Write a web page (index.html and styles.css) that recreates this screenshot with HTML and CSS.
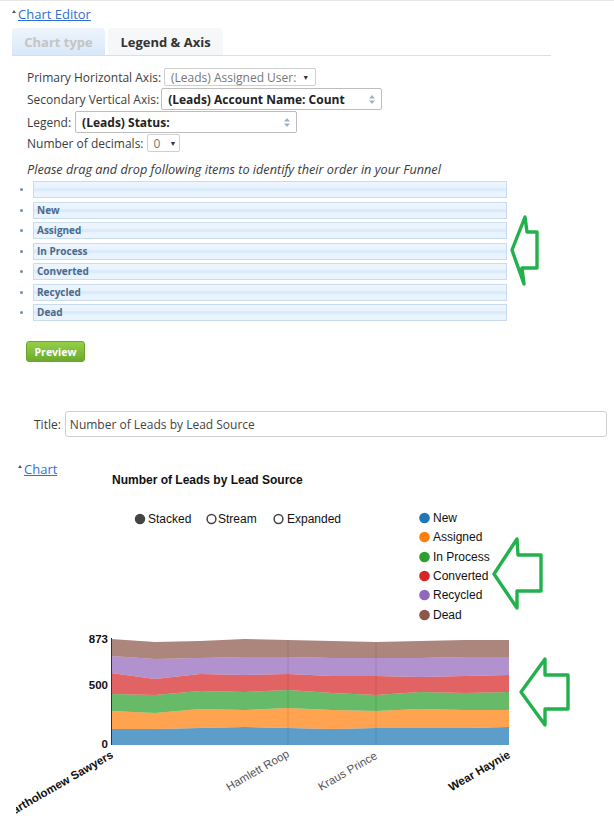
FILE: index.html
```html
<!DOCTYPE html>
<html>
<head>
<meta charset="utf-8">
<link rel="stylesheet" href="styles.css">
</head>
<body>
<div class="page">
  <div class="section-link editor-link"><span class="caret"></span><a href="#">Chart Editor</a></div>

  <div class="tabs">
    <div class="tab tab-inactive">Chart type</div>
    <div class="tab tab-active">Legend &amp; Axis</div>
  </div>

  <div class="form">
    <div class="row row-1">
      <span class="label">Primary Horizontal Axis:</span>
      <div class="select sel-primary"><span class="sel-text muted">(Leads) Assigned User:</span><span class="tri">&#9660;</span></div>
    </div>
    <div class="row row-2">
      <span class="label">Secondary Vertical Axis:</span>
      <div class="select sel-wide sel-secondary"><span class="sel-text strong">(Leads) Account Name: Count</span>
        <svg class="updown" width="6" height="9" viewBox="0 0 6 9"><path d="M3 0 L6 3.5 H0 Z M0 5.5 H6 L3 9 Z" fill="#9bb3c8"/></svg>
      </div>
    </div>
    <div class="row row-3">
      <span class="label">Legend:</span>
      <div class="select sel-wide sel-legend"><span class="sel-text strong">(Leads) Status:</span>
        <svg class="updown" width="6" height="9" viewBox="0 0 6 9"><path d="M3 0 L6 3.5 H0 Z M0 5.5 H6 L3 9 Z" fill="#9bb3c8"/></svg>
      </div>
    </div>
    <div class="row row-4">
      <span class="label">Number of decimals:</span>
      <div class="select sel-dec"><span class="sel-text muted">0</span><span class="tri">&#9660;</span></div>
    </div>

    <p class="hint">Please drag and drop following items to identify their order in your Funnel</p>

    <ul class="order-list">
      <li><span class="dot"></span><div class="item"></div></li>
      <li><span class="dot"></span><div class="item">New</div></li>
      <li><span class="dot"></span><div class="item">Assigned</div></li>
      <li><span class="dot"></span><div class="item">In Process</div></li>
      <li><span class="dot"></span><div class="item">Converted</div></li>
      <li><span class="dot"></span><div class="item">Recycled</div></li>
      <li><span class="dot"></span><div class="item">Dead</div></li>
    </ul>

    <button class="preview">Preview</button>
  </div>

  <div class="title-row">
    <span class="label">Title:</span>
    <div class="title-input">Number of Leads by Lead Source</div>
  </div>

  <div class="section-link chart-link"><span class="caret"></span><a href="#">Chart</a></div>

  <svg class="chart" width="598" height="354" viewBox="0 0 598 354">
    <g transform="translate(-16,-471)">
      <text class="ch-title" x="112" y="485">Number of Leads by Lead Source</text>

      <circle cx="140" cy="520" r="4.6" fill="#444" stroke="#444" stroke-width="1.2"/>
      <text class="ch-text" x="148" y="524">Stacked</text>
      <circle cx="211.5" cy="520" r="4.4" fill="#fff" stroke="#444" stroke-width="1.5"/>
      <text class="ch-text" x="218" y="524">Stream</text>
      <circle cx="278.5" cy="520" r="4.4" fill="#fff" stroke="#444" stroke-width="1.5"/>
      <text class="ch-text" x="287" y="524">Expanded</text>

      <circle cx="424.5" cy="519" r="5.3" fill="#1f77b4"/>
      <text class="ch-text" x="433" y="523">New</text>
      <circle cx="424.5" cy="538" r="5.3" fill="#ff7f0e"/>
      <text class="ch-text" x="433" y="542">Assigned</text>
      <circle cx="424.5" cy="558" r="5.3" fill="#2ca02c"/>
      <text class="ch-text" x="433" y="562">In Process</text>
      <circle cx="424.5" cy="577" r="5.3" fill="#d62728"/>
      <text class="ch-text" x="433" y="581">Converted</text>
      <circle cx="424.5" cy="596" r="5.3" fill="#9467bd"/>
      <text class="ch-text" x="433" y="600">Recycled</text>
      <circle cx="424.5" cy="616" r="5.3" fill="#8c564b"/>
      <text class="ch-text" x="433" y="620">Dead</text>

      <g class="layers" fill-opacity="0.72">
        <path fill="#1f77b4" d="M111,730 L155,730 L200,729 L245,728 L288,729 L332,730 L376,729 L420,729 L465,729 L509,728 L509,746 L111,746 Z"/>
        <path fill="#ff7f0e" d="M111,712 L155,714 L200,710 L245,711 L288,709 L332,711 L376,712 L420,710 L465,711 L509,711 L509,728 L465,729 L420,729 L376,729 L332,730 L288,729 L245,728 L200,729 L155,730 L111,730 Z"/>
        <path fill="#2ca02c" d="M111,695 L155,696 L200,692 L245,693 L288,691 L332,694 L376,696 L420,693 L465,694 L509,693 L509,711 L465,711 L420,710 L376,712 L332,711 L288,709 L245,711 L200,710 L155,714 L111,712 Z"/>
        <path fill="#d62728" d="M111,674 L155,680 L200,675 L245,676 L288,675 L332,677 L376,677 L420,678 L465,677 L509,676 L509,693 L465,694 L420,693 L376,696 L332,694 L288,691 L245,693 L200,692 L155,696 L111,695 Z"/>
        <path fill="#9467bd" d="M111,657 L155,660 L200,659 L245,658 L288,658 L332,659 L376,659 L420,659 L465,658 L509,658 L509,676 L465,677 L420,678 L376,677 L332,677 L288,675 L245,676 L200,675 L155,680 L111,674 Z"/>
        <path fill="#8c564b" d="M111,640 L155,643 L200,642 L245,640 L288,641 L332,642 L376,643 L420,642 L465,641 L509,641 L509,658 L465,658 L420,659 L376,659 L332,659 L288,658 L245,658 L200,659 L155,660 L111,657 Z"/>
      </g>
      <line x1="288" y1="641" x2="288" y2="746" stroke="#000" stroke-opacity="0.1"/>
      <line x1="376" y1="643" x2="376" y2="746" stroke="#000" stroke-opacity="0.1"/>
      <line x1="111.5" y1="639" x2="111.5" y2="746" stroke="#333" stroke-width="1"/>

      <text class="ax-y" x="108" y="644">873</text>
      <text class="ax-y" x="108" y="690">500</text>
      <text class="ax-y" x="108" y="749">0</text>

      <text class="ax-x bold" transform="translate(114,758) rotate(-30)">Bartholomew Sawyers</text>
      <text class="ax-x" transform="translate(290,757) rotate(-30)">Hamlett Roop</text>
      <text class="ax-x" transform="translate(378,759) rotate(-30)">Kraus Prince</text>
      <text class="ax-x bold" transform="translate(511,758) rotate(-30)">Wear Haynie</text>
    </g>
  </svg>

  <svg class="arrows" width="614" height="825" viewBox="0 0 614 825">
    <g fill="none" stroke="#22b14c" stroke-width="3.4" stroke-linejoin="round">
      <polygon points="512,249 525,216 527,231 537,231 537,267 522,267 524,283"/>
      <polygon points="494,573 517,538 518,554 541,554 541,590 517,590 517,607"/>
      <polygon points="521,691 545,658 545,674 568,674 568,708 545,708 545,724"/>
    </g>
  </svg>
</div>
</body>
</html>
```

FILE: styles.css
```css
html, body {
  margin: 0;
  padding: 0;
  background: #fff;
}
body {
  border-top: 1px solid #e6e6e6;
  font-family: "Open Sans", "Noto Sans", sans-serif;
  color: #3a3a3a;
  overflow: hidden;
}
.page {
  position: relative;
  width: 614px;
  height: 824px;
  overflow: hidden;
}

/* collapsible section links */
.section-link {
  display: flex;
  align-items: center;
  font-size: 13px;
  line-height: 15px;
}
.section-link a {
  color: #2f6fd6;
  text-decoration: underline;
}
.caret {
  width: 0;
  height: 0;
  border-left: 2.5px solid transparent;
  border-right: 2.5px solid transparent;
  border-bottom: 3px solid #555;
  margin-right: 2px;
  margin-top: -6px;
}
.editor-link {
  padding-top: 6px;
  padding-left: 12px;
}
.chart-link {
  margin-top: 25px;
  padding-left: 18px;
  position: relative;
  z-index: 1;
}

/* tabs */
.tabs {
  display: flex;
  gap: 3px;
  margin: 6px 0 0 12px;
  width: 539px;
  border-bottom: 1px solid #dedede;
}
.tab {
  height: 27px;
  display: flex;
  align-items: center;
  justify-content: center;
  font-size: 13px;
  font-weight: bold;
  border-radius: 4px 4px 0 0;
}
.tab-inactive {
  width: 93px;
  color: #c4c4c4;
  background: linear-gradient(#eef5fd, #d8e8f9);
}
.tab-active {
  width: 115px;
  color: #333;
  background: #f5f7f8;
}

/* form */
.form {
  padding-left: 27px;
  margin-top: 12px;
}
.row {
  display: flex;
  align-items: center;
  gap: 3px;
  font-size: 12px;
}
.row-2 { margin-top: 2px; gap: 2px; }
.row-3 { margin-top: 1px; gap: 4px; }
.row-4 { margin-top: 1px; gap: 3px; }
.label {
  font-size: 12px;
  color: #3c3c3c;
  white-space: nowrap;
}
.select {
  box-sizing: border-box;
  display: flex;
  align-items: center;
  border: 1px solid #cfcfcf;
  border-radius: 2px;
  background: #fff;
  padding-left: 6px;
  font-size: 12px;
}
.sel-primary {
  width: 152px;
  height: 18px;
}
.sel-wide {
  width: 222px;
  height: 22px;
  justify-content: space-between;
  padding-right: 6px;
  border-color: #bdbdbd;
}
.sel-secondary { width: 221px; }
.sel-dec {
  width: 33px;
  height: 18px;
}
.sel-text.muted { color: #777; }
.sel-text.strong { color: #222; font-weight: bold; }
.tri {
  font-size: 7px;
  color: #333;
  margin-left: 6px;
}
.sel-dec .tri { margin-left: 9px; }

.hint {
  margin: 9px 0 0 0;
  font-size: 12.7px;
  line-height: 17px;
  font-style: italic;
  color: #3a3a3a;
  white-space: nowrap;
}

/* drag list */
.order-list {
  list-style: none;
  margin: 3px 0 0 -7px;
  padding: 0;
}
.order-list li {
  display: flex;
  align-items: center;
  gap: 10px;
  margin-bottom: 3.5px;
}
.dot {
  width: 3px;
  height: 3px;
  border-radius: 50%;
  background: #6b8db3;
}
.item {
  box-sizing: border-box;
  width: 474px;
  height: 17px;
  border: 1px solid #c9dcef;
  background: linear-gradient(#edf5fe 0%, #e9f3fd 40%, #dcebfa 42%, #dcebfa 62%, #eaf4fe 64%, #eaf4fe 100%);
  padding-left: 3px;
  font-size: 10px;
  font-weight: bold;
  line-height: 15px;
  color: #4b6a8b;
}

.preview {
  display: block;
  margin: 20px 0 0 -1px;
  width: 59px;
  height: 21px;
  padding: 0;
  border: 1px solid #6aa52a;
  border-radius: 3px;
  background: linear-gradient(#95cf48, #6daa2d);
  color: #fff;
  font-family: "Open Sans", "Noto Sans", sans-serif;
  font-size: 10.5px;
  font-weight: bold;
}

/* title */
.title-row {
  display: flex;
  align-items: center;
  gap: 4px;
  margin-top: 49px;
  padding-left: 34px;
}
.title-input {
  box-sizing: border-box;
  width: 542px;
  height: 26px;
  border: 1px solid #cfcfcf;
  border-radius: 3px;
  padding-left: 4px;
  display: flex;
  align-items: center;
  font-size: 12px;
  color: #444;
}

/* chart */
.chart {
  display: block;
  margin: -7px 0 0 16px;
  font-family: "Liberation Sans", Arial, sans-serif;
}
.ch-title {
  font-size: 12px;
  font-weight: bold;
  fill: #111;
}
.ch-text {
  font-size: 12px;
  fill: #111;
}
.ax-y {
  font-size: 11.5px;
  font-weight: bold;
  text-anchor: end;
  fill: #111;
}
.ax-x {
  font-size: 11.5px;
  text-anchor: end;
  fill: #555;
}
.ax-x.bold {
  font-weight: bold;
  fill: #111;
}

.arrows {
  position: absolute;
  left: 0;
  top: 0;
  pointer-events: none;
}
```
